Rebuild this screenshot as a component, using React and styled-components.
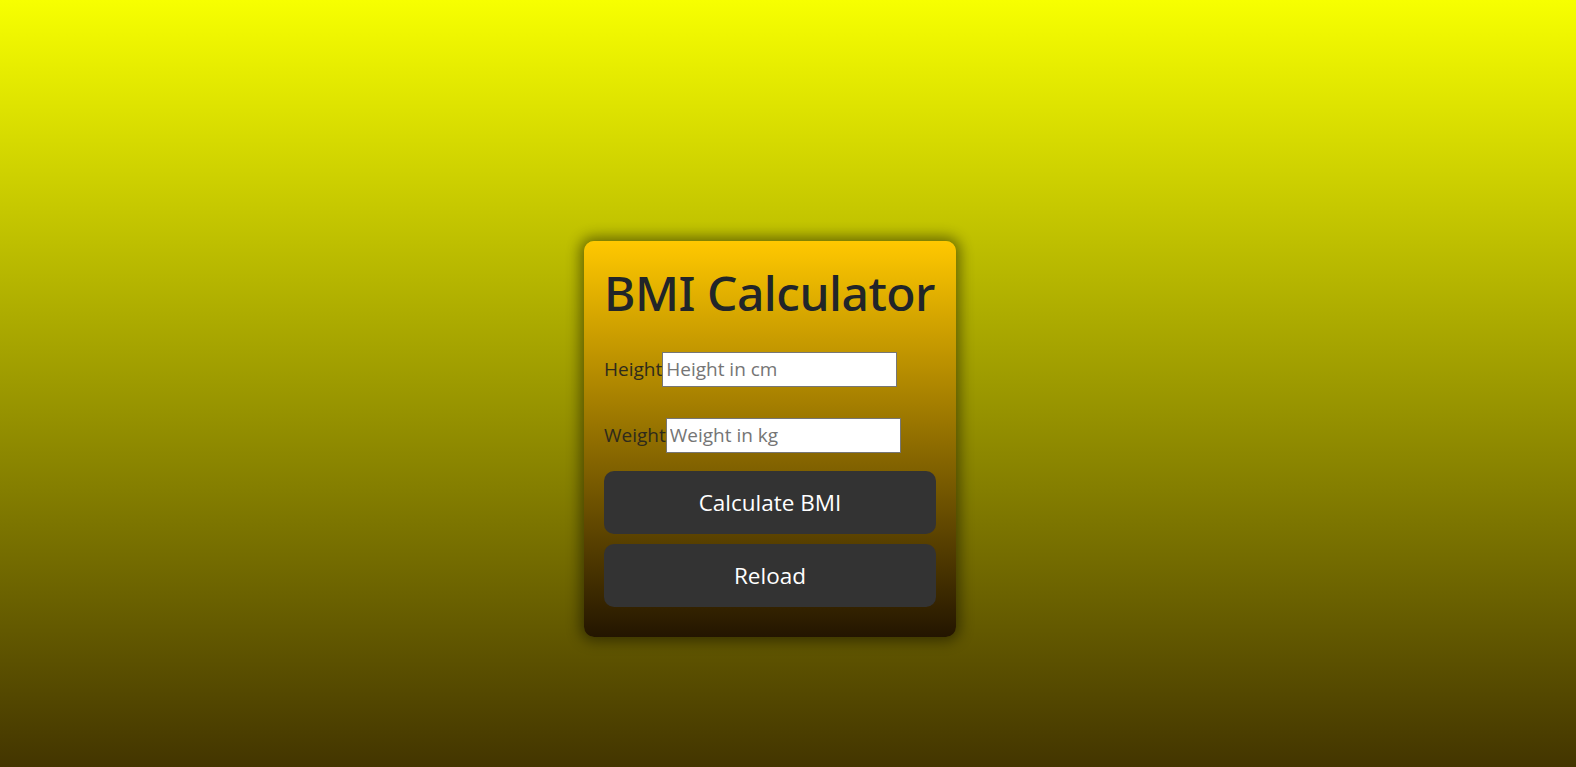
import styled, { createGlobalStyle } from 'styled-components';

const GlobalStyle = createGlobalStyle`
	* {
		box-sizing: border-box;
	}

	body {
		margin: 0;
		min-height: 100vh;
		font-family: 'Open Sans', 'Noto Sans', sans-serif;
		color: #212529;
		background: linear-gradient(to bottom, #f7ff00, #433500);
	}
`;

const App = () => {
	return (
		<>
			<GlobalStyle />
			<Page>
				<Card>
					<Title>BMI Calculator</Title>
					<Field>
						<label htmlFor='height'>Height</label>
						<input id='height' type='text' placeholder='Height in cm' />
					</Field>
					<Field $last>
						<label htmlFor='weight'>Weight</label>
						<input id='weight' type='text' placeholder='Weight in kg' />
					</Field>
					<Actions>
						<Button>Calculate BMI</Button>
						<Button>Reload</Button>
					</Actions>
				</Card>
			</Page>
		</>
	);
};

const Page = styled.div`
	min-height: 100vh;
	display: flex;
	justify-content: center;
	align-items: flex-start;
	padding: 241px 36px 0 0;
`;

const Card = styled.div`
	width: 372px;
	padding: 20px 20px 30px;
	border-radius: 10px;
	background: linear-gradient(to bottom, #ffc800, #231500);
	box-shadow: 0 0 14px 4px hsl(0, 0%, 0%, 0.45);
	display: flex;
	flex-direction: column;
`;

const Title = styled.h1`
	margin: 3px 0 30px;
	font-family: 'Noto Sans', 'Open Sans', sans-serif;
	font-size: 48px;
	font-weight: 500;
	line-height: 1.2;
	letter-spacing: -0.5px;
	white-space: nowrap;
`;

const Field = styled.div`
	display: flex;
	align-items: center;
	margin-bottom: ${(p) => (p.$last ? '18px' : '31px')};
	font-size: 19px;

	label {
		color: #2e2a1c;
	}

	input {
		width: 235px;
		height: 35px;
		padding: 1px 3px;
		border: 1px solid #767676;
		background: #fff;
		font-family: 'Open Sans', 'Noto Sans', sans-serif;
		font-size: 19px;
		color: #333;
		outline: none;
	}

	input::placeholder {
		color: #757575;
	}
`;

const Actions = styled.div`
	display: flex;
	flex-direction: column;
	gap: 10px;
`;

const Button = styled.button`
	height: 63px;
	border: none;
	border-radius: 10px;
	background: #333;
	color: #fff;
	font-family: 'Open Sans', 'Noto Sans', sans-serif;
	font-size: 22.5px;
	cursor: pointer;
`;

export default App;
